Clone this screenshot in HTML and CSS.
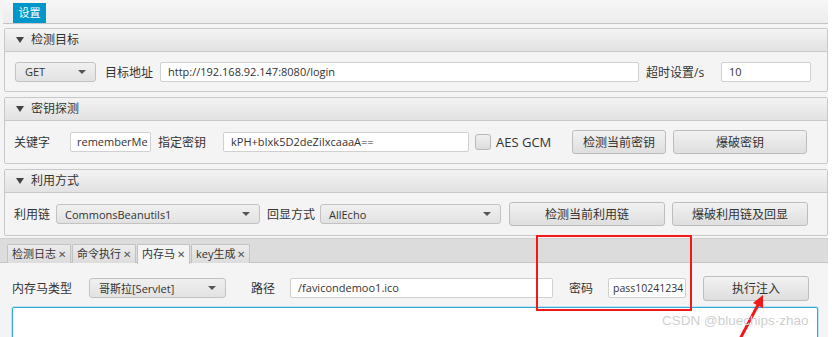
FILE: index.html
```html
<!DOCTYPE html>
<html lang="zh-CN">
  <head>
    <meta charset="UTF-8" />
    <title>设置</title>
    <link rel="stylesheet" href="styles.css">
  </head>
  <body>
    <div class="app">
      <div class="topbar">
        <span class="toptab">设置</span>
      </div>

      <div class="pane pane-target">
        <div class="pane-title"><span class="caret"></span>检测目标</div>
        <div class="pane-body">
          <div class="combo w-get"><span>GET</span><i class="arrow"></i></div>
          <label class="lbl">目标地址</label>
          <div class="field w-url">http://192.168.92.147:8080/login</div>
          <label class="lbl lbl-timeout">超时设置/s</label>
          <div class="field w-timeout">10</div>
        </div>
      </div>

      <div class="pane pane-key">
        <div class="pane-title"><span class="caret"></span>密钥探测</div>
        <div class="pane-body">
          <label class="lbl lbl-keyword">关键字</label>
          <div class="field w-keyword">rememberMe</div>
          <label class="lbl lbl-secret">指定密钥</label>
          <div class="field w-secret">kPH+bIxk5D2deZiIxcaaaA==</div>
          <span class="check"></span>
          <label class="lbl lbl-gcm">AES GCM</label>
          <button class="btn w-detect-key">检测当前密钥</button>
          <button class="btn w-brute-key">爆破密钥</button>
        </div>
      </div>

      <div class="pane pane-use">
        <div class="pane-title"><span class="caret"></span>利用方式</div>
        <div class="pane-body">
          <label class="lbl lbl-chain">利用链</label>
          <div class="combo w-chain"><span>CommonsBeanutils1</span><i class="arrow"></i></div>
          <label class="lbl lbl-echo">回显方式</label>
          <div class="combo w-echo"><span>AllEcho</span><i class="arrow"></i></div>
          <button class="btn w-detect-chain">检测当前利用链</button>
          <button class="btn w-brute-chain">爆破利用链及回显</button>
        </div>
      </div>

      <div class="tabpane">
        <div class="tabs">
          <span class="tab">检测日志<b>✕</b></span>
          <span class="tab">命令执行<b>✕</b></span>
          <span class="tab active">内存马<b>✕</b></span>
          <span class="tab">key生成<b>✕</b></span>
        </div>
        <div class="tab-body">
          <div class="inject-row">
            <label class="lbl">内存马类型</label>
            <div class="combo w-shell"><span>哥斯拉[Servlet]</span><i class="arrow"></i></div>
            <label class="lbl lbl-path">路径</label>
            <div class="field w-path">/favicondemoo1.ico</div>
            <label class="lbl lbl-pass">密码</label>
            <div class="field w-pass">pass10241234</div>
            <button class="btn w-inject">执行注入</button>
          </div>
          <div class="output"></div>
        </div>
      </div>

      <div class="mark-box"></div>
      <svg class="mark-arrow" width="40" height="45" viewBox="0 0 40 45">
        <path d="M6 45 L25 9" stroke="#f01818" stroke-width="3" fill="none" />
        <path d="M29 1 L19 9 L29 14 Z" fill="#f01818" />
      </svg>
      <span class="watermark">CSDN @bluechips·zhao</span>
    </div>
  </body>
</html>
```

FILE: styles.css
```css
* {
  margin: 0;
  padding: 0;
  box-sizing: border-box;
}
body {
  background: #fff;
  font-family: "Open Sans", "Noto Sans CJK SC", sans-serif;
  font-size: 12px;
  color: #333;
}
.app {
  position: relative;
  width: 828px;
  height: 337px;
  overflow: hidden;
  background: #f4f4f4;
}

/* top tab header */
.topbar {
  height: 24px;
  padding: 3px 0 0 10px;
  background: linear-gradient(#f7f7f7, #ececec);
  border-bottom: 1px solid #c4c4c4;
  margin: 0 0 0 3px;
}
.toptab {
  display: inline-block;
  width: 33px;
  height: 20px;
  line-height: 20px;
  text-align: center;
  background: #0096c9;
  color: #fff;
  font-size: 11px;
}

/* titled panes */
.pane {
  margin: 4px 0 0 4px;
  border: 1px solid #c8c8c8;
  border-radius: 2px;
  background: #f4f4f4;
}
.pane + .pane {
  margin-top: 5px;
}
.pane-title {
  height: 23px;
  line-height: 22px;
  padding-left: 11px;
  background: linear-gradient(#f3f3f3, #e2e2e2);
  border-bottom: 1px solid #c8c8c8;
  color: #333;
  font-size: 12px;
}
.caret {
  display: inline-block;
  width: 0;
  height: 0;
  border-left: 4px solid transparent;
  border-right: 4px solid transparent;
  border-top: 6px solid #444;
  margin-right: 7px;
  vertical-align: 1px;
}
.pane-body {
  display: flex;
  align-items: center;
  padding: 0 0 0 9px;
}
.pane-body > *,
.inject-row > * {
  flex-shrink: 0;
}
.pane-target .pane-body {
  height: 39px;
}
.pane-key .pane-body {
  height: 42px;
}
.pane-use .pane-body {
  height: 42px;
}

.lbl {
  color: #333;
  font-size: 12px;
  margin: 0 7px 0 0;
  white-space: nowrap;
}
.field {
  height: 20px;
  line-height: 18px;
  padding: 0 7px;
  background: #fff;
  border: 1px solid #d0d0d0;
  border-radius: 2px;
  font-size: 11px;
  color: #333;
  white-space: nowrap;
  overflow: hidden;
}
.combo {
  display: flex;
  align-items: center;
  justify-content: space-between;
  height: 20px;
  padding: 0 9px 0 9px;
  background: linear-gradient(#f0f0f0, #e2e2e2);
  border: 1px solid #c2c2c2;
  border-radius: 3px;
  font-size: 11px;
  color: #333;
}
.arrow {
  width: 0;
  height: 0;
  border-left: 4px solid transparent;
  border-right: 4px solid transparent;
  border-top: 4px solid #555;
}
.btn {
  height: 24px;
  background: linear-gradient(#f2f2f2, #dedede);
  border: 1px solid #bdbdbd;
  border-radius: 3px;
  font-family: inherit;
  font-size: 12px;
  color: #333;
}
.check {
  width: 16px;
  height: 16px;
  margin: 0 5px 0 6px;
  border: 1px solid #b8b8b8;
  border-radius: 3px;
  background: linear-gradient(#f0f0f0, #dcdcdc);
}
.lbl-gcm {
  width: 76px;
  font-size: 13px;
  margin-right: 0;
}

/* widths */
.w-get { width: 81px; margin: 0 9px 0 1px; }
.w-url { width: 479px; margin-right: 7px; }
.lbl-timeout { margin-right: 0; width: 75px; }
.w-timeout { width: 90px; }
.lbl-keyword { width: 56px; margin-right: 0; }
.w-keyword { width: 81px; margin-right: 7px; padding: 0 6px; }
.lbl-secret { width: 65px; margin-right: 0; }
.w-secret { width: 246px; }
.w-detect-key { width: 94px; }
.w-brute-key { width: 134px; margin-left: 7px; }
.lbl-chain { width: 42px; margin-right: 0; }
.w-chain { width: 204px; margin-right: 7px; padding-left: 8px; }
.lbl-echo { width: 53px; margin-right: 0; }
.w-echo { width: 181px; margin-right: 8px; padding-left: 8px; }
.w-detect-chain { width: 156px; }
.w-brute-chain { width: 136px; margin-left: 7px; }

/* bottom tab pane */
.tabpane {
  margin: 2px 0 0 0;
}
.tabs {
  display: flex;
  gap: 1px;
  height: 25px;
  padding: 5px 0 0 7px;
  background: #dcdcdc;
  border-top: 1px solid #cfcfcf;
  border-bottom: 1px solid #c4c4c4;
}
.tab {
  height: 19px;
  line-height: 18px;
  padding: 0 4px 0 4px;
  background: linear-gradient(#ececec, #dcdcdc);
  border: 1px solid #c2c2c2;
  border-bottom: 0;
  border-radius: 2px 2px 0 0;
  font-size: 11px;
  color: #333;
}
.tab b {
  font-weight: normal;
  font-size: 10px;
  margin-left: 2px;
  color: #555;
}
.tab.active {
  background: #f4f4f4;
  height: 20px;
}
.tab-body {
  padding: 12px 0 0 12px;
}
.inject-row {
  display: flex;
  align-items: center;
  height: 26px;
}
.w-shell { width: 137px; margin: 0 25px 0 10px; }
.lbl-path { margin-right: 15px; }
.w-path { width: 263px; }
.lbl-pass { margin: 0 15px 0 16px; }
.w-pass { width: 78px; padding: 0 4px; font-size: 10.5px; }
.w-inject { width: 106px; height: 25px; margin-left: 17px; }
.output {
  width: 806px;
  height: 40px;
  margin-top: 6px;
  background: #fff;
  border: 1px solid #34a8d9;
  border-radius: 2px;
  box-shadow: 0 0 0 1px #bfe4f3;
}

/* screenshot annotations */
.mark-box {
  position: absolute;
  left: 536px;
  top: 235px;
  width: 156px;
  height: 76px;
  border: 2px solid #f01818;
}
.mark-arrow {
  position: absolute;
  left: 734px;
  top: 294px;
}
.watermark {
  position: absolute;
  left: 662px;
  top: 313px;
  font-family: "Liberation Sans", "Noto Sans CJK SC", sans-serif;
  font-size: 13.5px;
  color: #cfcfcf;
}
```
